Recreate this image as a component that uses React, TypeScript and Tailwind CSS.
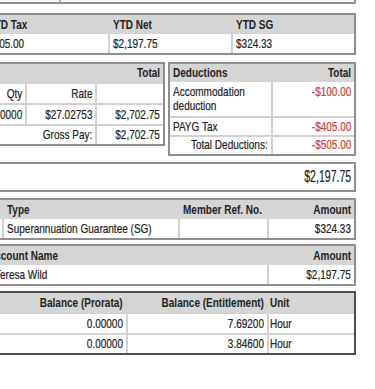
import React from 'react'

const edge = 'border-[#8e8e8e]'
const line = 'border-[#d2d2d2]'
const head = 'bg-[#d5d5d5] font-bold [-webkit-text-stroke:0px]'
const red = 'text-[#cc3d3d]'

// Helvetica Condensed is not installed: squeeze Liberation Sans to its width
function T({ children, right = false, wide = false }: { children?: React.ReactNode; right?: boolean; wide?: boolean }) {
  return (
    <span
      className={`inline-block ${wide ? 'scale-x-[0.66]' : 'scale-x-[0.77]'} ${right ? 'origin-right' : 'origin-left'}`}
    >
      {children}
    </span>
  )
}

function Cell({
  children,
  right = false,
  className = '',
}: {
  children?: React.ReactNode
  right?: boolean
  className?: string
}) {
  return (
    <div
      className={`flex items-center overflow-hidden whitespace-nowrap px-[3px] ${right ? 'justify-end' : ''} ${className}`}
    >
      {children !== undefined && <T right={right}>{children}</T>}
    </div>
  )
}

export default function App() {
  return (
    <div
      className="w-[375px] h-[389px] overflow-hidden bg-white text-[13px] leading-[14px] text-[#222] [-webkit-text-stroke:0.2px]"
      style={{ fontFamily: "'Liberation Sans Narrow', 'Liberation Sans', Arial, sans-serif" }}
    >
      <div className="-ml-[140px] w-[496px]">
        {/* tail of the block above */}
        <div className={`h-[4px] border-b-2 border-r-2 ${edge} flex`}>
          <div className="ml-[199px] w-[2px] h-[2px] bg-[#b5b5b5]" />
        </div>

        {/* YTD totals */}
        <div className={`mt-[9px] border-2 ${edge}`}>
          <div className={`grid grid-cols-[121px_125px_123px_1fr] h-[19px] ${head}`}>
            <Cell>YTD Gross</Cell>
            <Cell className="border-l-2 border-[#d5d5d5]">YTD Tax</Cell>
            <Cell className="border-l-2 border-[#d5d5d5]">YTD Net</Cell>
            <Cell className="border-l-2 border-[#d5d5d5]">YTD SG</Cell>
          </div>
          <div className="grid grid-cols-[121px_125px_123px_1fr] h-[19px]">
            <Cell>$2,702.75</Cell>
            <Cell className={`border-l-2 ${line}`}>$505.00</Cell>
            <Cell className={`border-l-2 ${line}`}>$2,197.75</Cell>
            <Cell className={`border-l-2 ${line}`}>$324.33</Cell>
          </div>
        </div>

        {/* Earnings + deductions */}
        <div className="mt-[7px] flex items-start gap-[3px]">
          <div className={`w-[305px] border-2 ${edge}`}>
            <div className={`flex justify-between h-[18px] ${head}`}>
              <Cell>Earnings</Cell>
              <Cell right>Total</Cell>
            </div>
            <div className={`grid grid-cols-[83px_80px_70px_1fr] h-[21px] border-t-2 ${line}`}>
              <Cell>Description</Cell>
              <Cell right className={`border-l-2 ${line}`}>Qty</Cell>
              <Cell right className={`border-l-2 ${line}`}>Rate</Cell>
              <Cell className={`border-l-2 ${line}`} />
            </div>
            <div className={`grid grid-cols-[83px_80px_70px_1fr] h-[21px] border-t-2 ${line}`}>
              <Cell>Ordinary Hours</Cell>
              <Cell right className={`border-l-2 ${line}`}>100.0000</Cell>
              <Cell right className={`border-l-2 ${line}`}>$27.02753</Cell>
              <Cell right className={`border-l-2 ${line}`}>$2,702.75</Cell>
            </div>
            <div className={`grid grid-cols-[233px_1fr] h-[20px] border-t-2 ${line}`}>
              <Cell right>Gross Pay:</Cell>
              <Cell right className={`border-l-2 ${line}`}>$2,702.75</Cell>
            </div>
          </div>

          <div className={`w-[188px] border-2 ${edge}`}>
            <div className={`flex justify-between h-[18px] ${head}`}>
              <Cell>Deductions</Cell>
              <Cell right>Total</Cell>
            </div>
            <div className="grid grid-cols-[101px_1fr] h-[34px]">
              <div className="px-[3px] pt-[3px]">
                <T>
                  Accommodation
                  <br />
                  deduction
                </T>
              </div>
              <Cell right className={`items-start pt-[3px] border-l-2 ${line} ${red}`}>-$100.00</Cell>
            </div>
            <div className={`grid grid-cols-[101px_1fr] h-[19px] border-t-2 ${line}`}>
              <Cell>PAYG Tax</Cell>
              <Cell right className={`border-l-2 ${line} ${red}`}>-$405.00</Cell>
            </div>
            <div className={`grid grid-cols-[101px_1fr] h-[19px] border-t-2 ${line}`}>
              <Cell right className="pb-[2px]">Total Deductions:</Cell>
              <Cell right className={`pb-[2px] border-l-2 ${line} ${red}`}>-$505.00</Cell>
            </div>
          </div>
        </div>

        {/* Net pay */}
        <div className={`mt-[6px] h-[30px] border-2 ${edge} flex items-center justify-between px-[3px] text-[16px]`}>
          <T wide>Net Pay:</T>
          <T wide right>$2,197.75</T>
        </div>

        {/* Superannuation */}
        <div className={`mt-[6px] border-2 ${edge}`}>
          <div className={`grid grid-cols-[140px_176px_89px_1fr] h-[19px] ${head}`}>
            <Cell>Fund</Cell>
            <Cell className="border-l-2 border-[#d5d5d5]">Type</Cell>
            <Cell className="border-l-2 border-[#d5d5d5]">Member Ref. No.</Cell>
            <Cell right className="border-l-2 border-[#d5d5d5]">Amount</Cell>
          </div>
          <div className="grid grid-cols-[140px_176px_89px_1fr] h-[19px]">
            <Cell>AustralianSuper</Cell>
            <Cell className={`border-l-2 ${line}`}>Superannuation Guarantee (SG)</Cell>
            <Cell className={`border-l-2 ${line}`} />
            <Cell right className={`border-l-2 ${line}`}>$324.33</Cell>
          </div>
        </div>

        {/* Bank */}
        <div className={`mt-[4px] border-2 ${edge}`}>
          <div className={`grid grid-cols-[121px_284px_1fr] h-[19px] ${head}`}>
            <Cell>BSB / Account</Cell>
            <Cell className="border-l-2 border-[#d5d5d5]">Account Name</Cell>
            <Cell right className="border-l-2 border-[#d5d5d5]">Amount</Cell>
          </div>
          <div className="grid grid-cols-[121px_284px_1fr] h-[19px]">
            <Cell>000-000 00000000</Cell>
            <Cell className="border-l-2 border-white pl-[10px]">Teresa Wild</Cell>
            <Cell right className={`border-l-2 ${line}`}>$2,197.75</Cell>
          </div>
        </div>

        {/* Leave */}
        <div className="mt-[5px] border-2 border-[#4e4e4e]">
          <div className={`grid grid-cols-[118px_146px_141px_1fr] h-[19px] ${head}`}>
            <Cell>Leave</Cell>
            <Cell right>Balance (Prorata)</Cell>
            <Cell right className="border-l-2 border-[#d5d5d5]">Balance (Entitlement)</Cell>
            <Cell className="border-l-2 border-[#d5d5d5] pl-[1px]">Unit</Cell>
          </div>
          <div className={`grid grid-cols-[118px_146px_141px_1fr] h-[21px] border-t-2 ${line}`}>
            <Cell>Annual Leave</Cell>
            <Cell right>0.00000</Cell>
            <Cell right className={`border-l-2 ${line}`}>7.69200</Cell>
            <Cell className={`border-l-2 ${line} pl-[1px]`}>Hour</Cell>
          </div>
          <div className={`grid grid-cols-[118px_146px_141px_1fr] h-[20px] border-t-2 ${line}`}>
            <Cell>Personal Leave</Cell>
            <Cell right>0.00000</Cell>
            <Cell right className={`border-l-2 ${line}`}>3.84600</Cell>
            <Cell className={`border-l-2 ${line} pl-[1px]`}>Hour</Cell>
          </div>
        </div>
      </div>
    </div>
  )
}
